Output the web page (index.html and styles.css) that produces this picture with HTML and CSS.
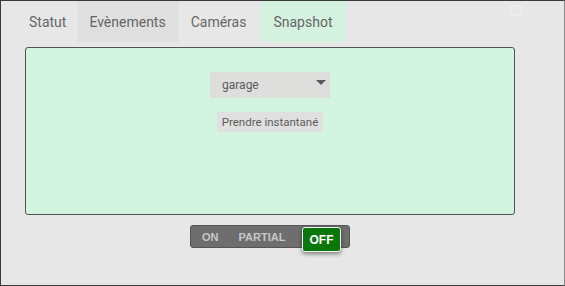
FILE: index.html
```html
<!DOCTYPE html>
<html lang="fr">
<head>
  <meta charset="UTF-8">
  <meta name="viewport" content="width=device-width, initial-scale=1.0">
  <title>Alarme</title>
  <link rel="stylesheet" href="styles.css">
</head>
<body>
  <div class="widget">
    <svg class="corner-icon" width="12" height="11" viewBox="0 0 12 11">
      <rect x="1" y="1" width="10" height="9" rx="2" fill="none" stroke="#f6f6f6" stroke-width="1.5"/>
    </svg>
    <div class="tabs">
      <div class="tab">Statut</div>
      <div class="tab tab-dim">Evènements</div>
      <div class="tab tab-wide">Caméras</div>
      <div class="tab tab-wide tab-active">Snapshot</div>
    </div>

    <div class="panel">
      <div class="select">
        <span>garage</span>
        <span class="caret"></span>
      </div>
      <button class="snap-btn">Prendre instantané</button>
    </div>

    <div class="toggle-row">
      <div class="toggle">
        <span class="opt opt-on">ON</span>
        <span class="opt opt-partial">PARTIAL</span>
        <span class="opt opt-off">OFF</span>
      </div>
    </div>
  </div>
</body>
</html>
```

FILE: styles.css
```css
html, body {
  margin: 0;
  padding: 0;
}

body {
  font-family: Roboto, "Liberation Sans", sans-serif;
  background: #e8e7e8;
}

.widget {
  position: relative;
  box-sizing: border-box;
  width: 565px;
  height: 286px;
  border: 1px solid #3a3a3a;
  border-right-color: #8a8a8a;
  padding: 0 0 0 17px;
}

.corner-icon {
  position: absolute;
  top: 4px;
  left: 509px;
  opacity: 0.6;
}

.tabs {
  display: flex;
  height: 41px;
}

.tab {
  display: flex;
  align-items: center;
  padding: 0 12px 0 11px;
  font-size: 14px;
  color: #666;
}

.tab-wide {
  padding: 0 14px 0 13px;
}

.tab-dim {
  background: #e0dfe0;
}

.tab-active {
  background: #d4f2df;
}

.panel {
  box-sizing: border-box;
  width: 490px;
  height: 168px;
  margin: 5px 0 0 7px;
  background: #d4f4e2;
  border: 1px solid #4d5552;
  border-radius: 3px;
  display: flex;
  flex-direction: column;
  align-items: center;
  padding-top: 24px;
}

.select {
  box-sizing: border-box;
  width: 120px;
  height: 26px;
  background: #dededd;
  display: flex;
  align-items: center;
  justify-content: space-between;
  padding: 0 4px 1px 12px;
  font-size: 12px;
  color: #5c5c5c;
}

.caret {
  width: 0;
  height: 0;
  border-left: 5px solid transparent;
  border-right: 5px solid transparent;
  border-top: 5px solid #5a5a5a;
  margin-bottom: 4px;
}

.snap-btn {
  margin-top: 14px;
  height: 20px;
  padding: 0 5px;
  border: none;
  background: #e0e0e0;
  font-family: Roboto, "Liberation Sans", sans-serif;
  font-size: 11.5px;
  color: #5c5c5c;
}

.toggle-row {
  display: flex;
  padding: 10px 0 0 172px;
}

.toggle {
  position: relative;
  box-sizing: border-box;
  width: 160px;
  height: 23px;
  background: #6e6e6e;
  border: 1px solid #555;
  border-radius: 3px;
  display: flex;
  align-items: center;
  font-family: "Liberation Sans", Arial, sans-serif;
  font-weight: bold;
  font-size: 11px;
  color: #c8c8c8;
}

.opt-on {
  margin-left: 11px;
}

.opt-partial {
  margin-left: 20px;
}

.opt-off {
  position: absolute;
  left: 111px;
  top: 1px;
  box-sizing: border-box;
  width: 39px;
  height: 25px;
  display: flex;
  align-items: center;
  justify-content: center;
  background: #0a770a;
  color: #fff;
  font-size: 12px;
  border: 1px solid #f4f4f4;
  border-radius: 3px;
  box-shadow: 0 2px 4px rgba(0, 0, 0, 0.45);
}
```
